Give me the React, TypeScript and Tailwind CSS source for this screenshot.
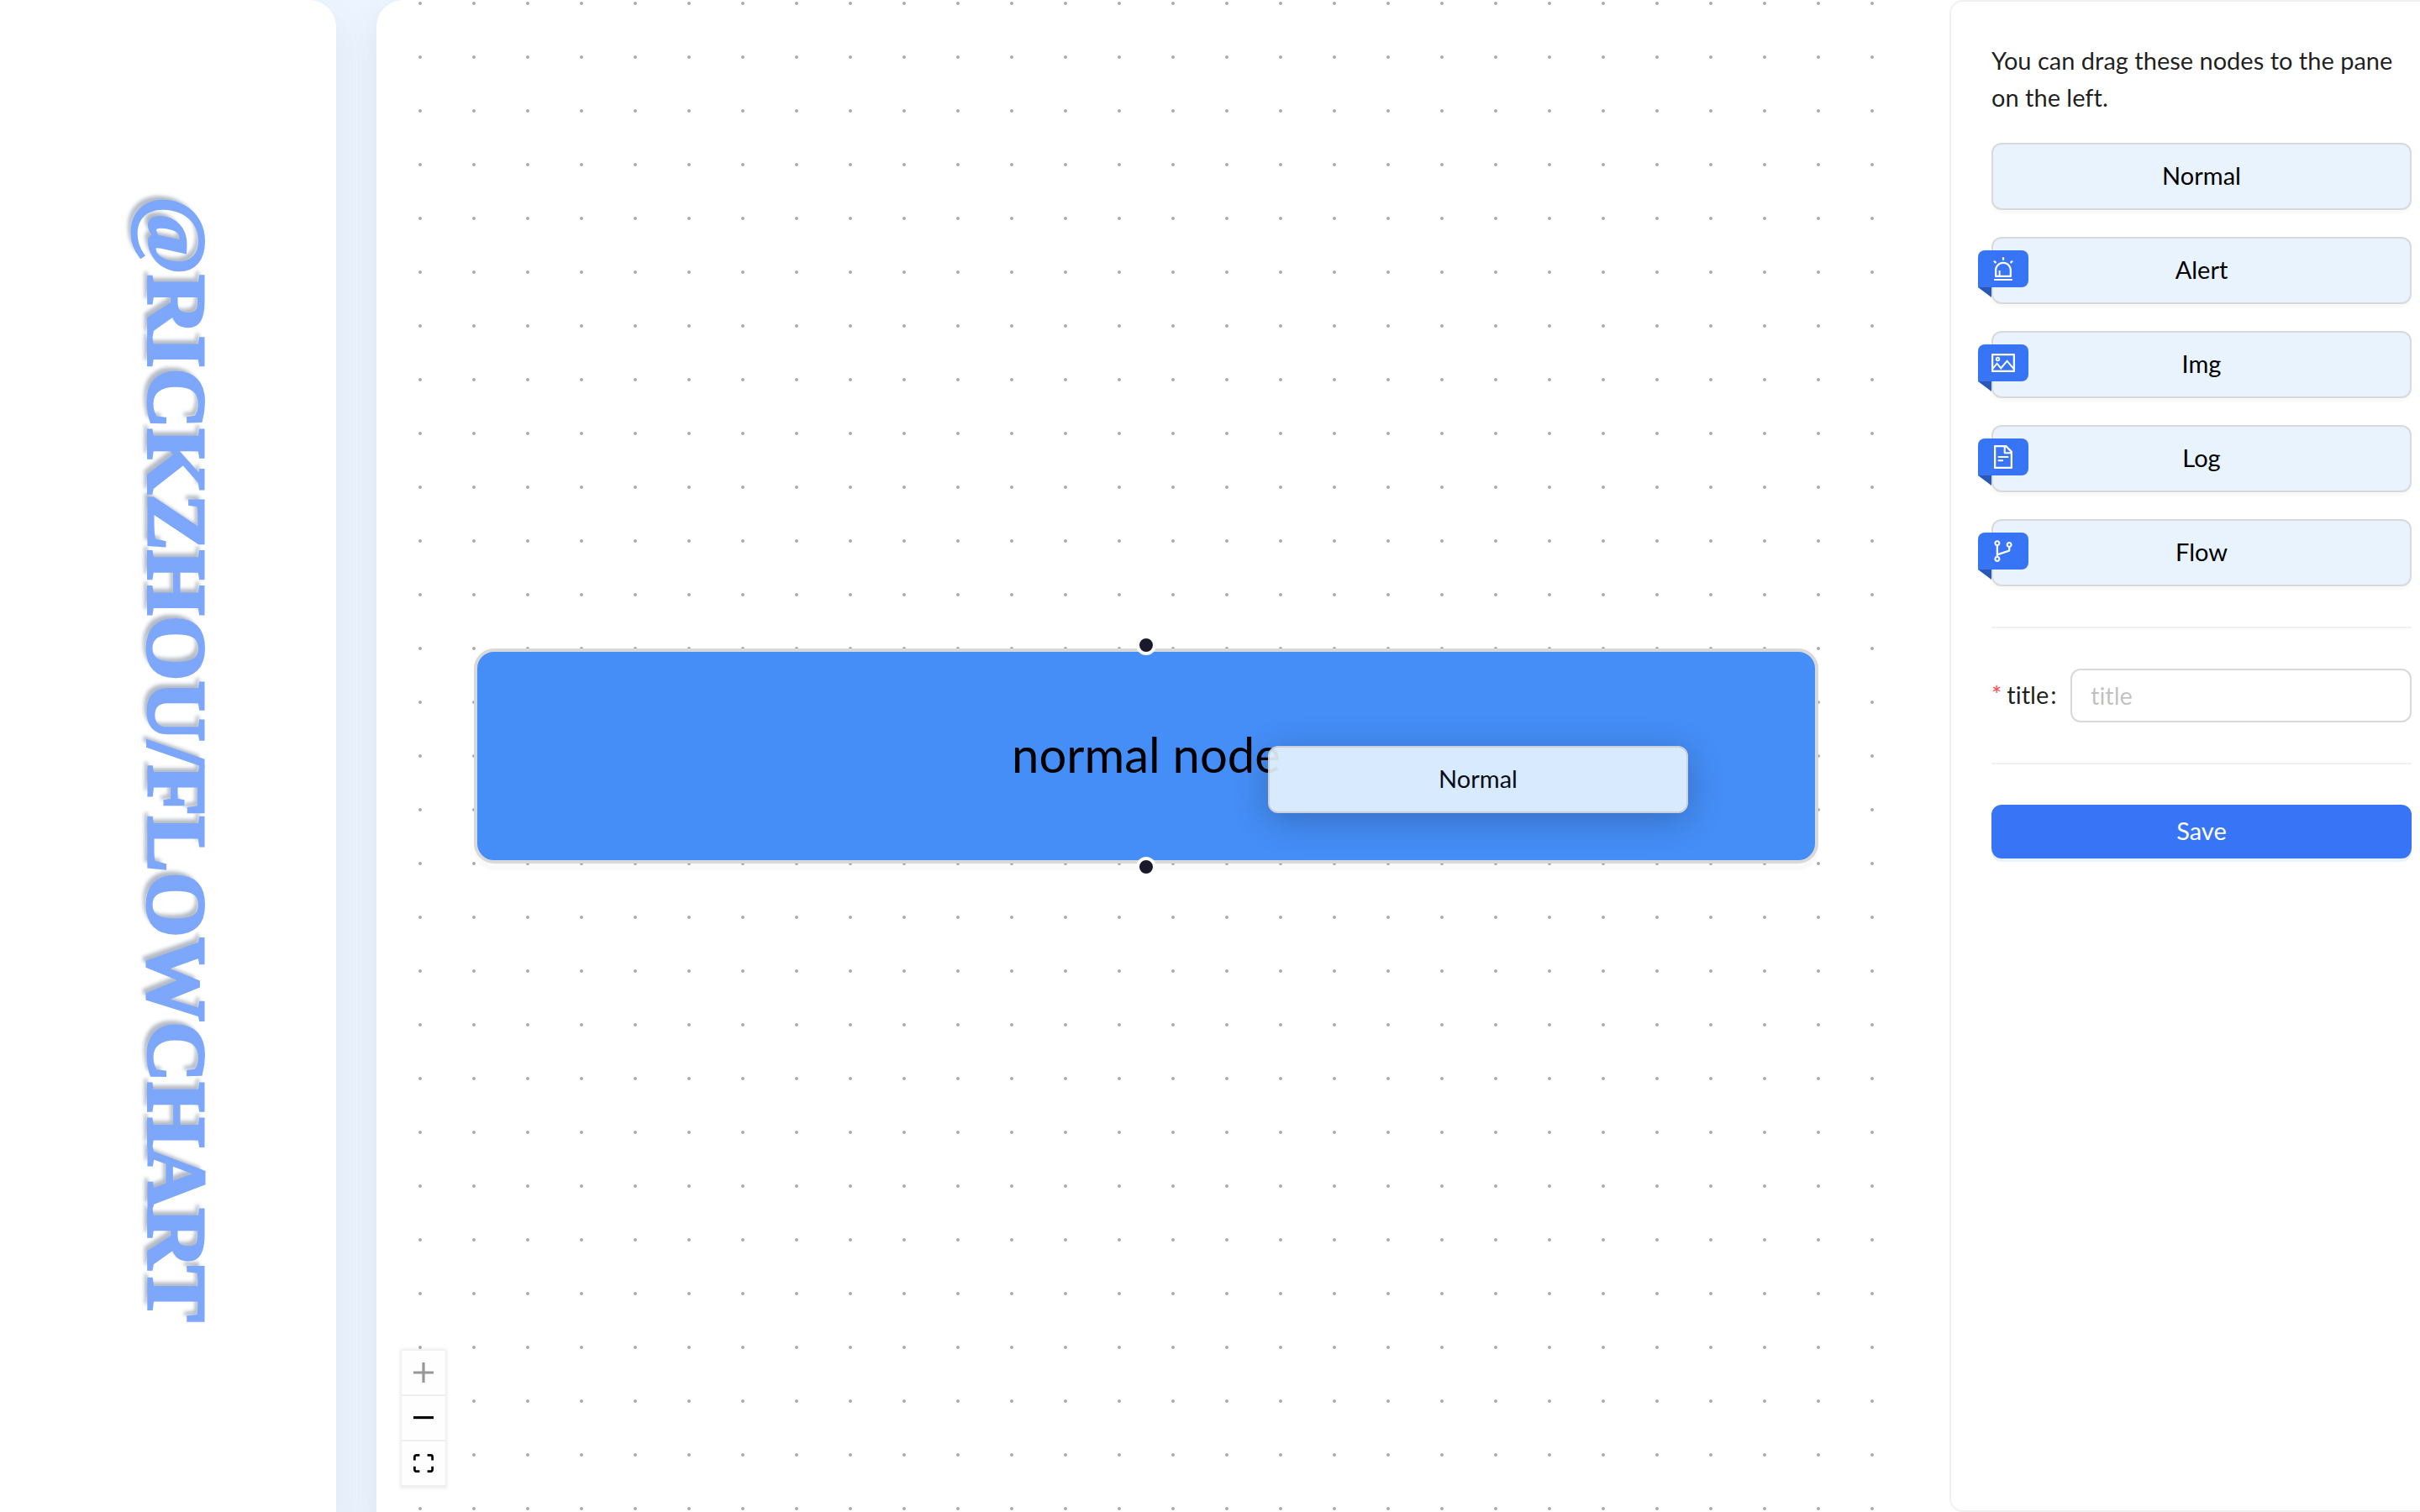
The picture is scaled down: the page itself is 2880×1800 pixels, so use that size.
import type { ReactNode } from "react";
import {
  AiOutlineAlert,
  AiOutlineBranches,
  AiOutlineFileText,
  AiOutlinePicture,
} from "react-icons/ai";

const paletteNodes: { label: string; icon?: ReactNode }[] = [
  { label: "Normal" },
  { label: "Alert", icon: <AiOutlineAlert /> },
  { label: "Img", icon: <AiOutlinePicture /> },
  { label: "Log", icon: <AiOutlineFileText /> },
  { label: "Flow", icon: <AiOutlineBranches /> },
];

function Ribbon({ children }: { children: ReactNode }) {
  return (
    <span className="absolute -left-[18px] top-3.5">
      <span className="flex h-11 w-15 items-center justify-center rounded-lg rounded-bl-none bg-[#3875f6] text-[32px] text-white">
        {children}
      </span>
      <svg className="block h-3 w-4" viewBox="0 0 16 12" aria-hidden="true">
        <path d="M0 0h16v12z" fill="#2a58b9" />
      </svg>
    </span>
  );
}

function PaletteNode({ label, icon }: { label: string; icon?: ReactNode }) {
  return (
    <button
      type="button"
      draggable
      className="relative flex h-20 w-full cursor-grab items-center justify-center rounded-xl border-2 border-[#d9d9d9] bg-[#e8f3fe] pb-0.5 text-black shadow-[0_4px_0_rgba(0,0,0,0.02)]"
    >
      {icon && <Ribbon>{icon}</Ribbon>}
      {label}
    </button>
  );
}

function Controls() {
  const button =
    "flex h-[54px] w-[52px] items-center justify-center border-b-2 border-[#eee] bg-[#fefefe]";
  return (
    <div className="absolute bottom-[30px] left-[30px] shadow-[0_0_4px_2px_rgba(0,0,0,0.08)]">
      <button type="button" aria-label="zoom in" disabled className={button}>
        <svg className="size-6 opacity-40" viewBox="0 0 32 32">
          <path d="M32 18.133H18.133V32h-4.266V18.133H0v-4.266h13.867V0h4.266v13.867H32z" />
        </svg>
      </button>
      <button type="button" aria-label="zoom out" className={button}>
        <svg className="w-6" viewBox="0 0 32 5">
          <path d="M0 0h32v4.2H0z" />
        </svg>
      </button>
      <button type="button" aria-label="fit view" className={button}>
        <svg className="w-6" viewBox="0 0 32 30">
          <path d="M3.692 4.63c0-.53.4-.938.939-.938h5.215V0H4.708C2.13 0 0 2.054 0 4.63v5.216h3.692V4.631zM27.354 0h-5.2v3.692h5.17c.53 0 .984.4.984.939v5.215H32V4.631A4.624 4.624 0 0027.354 0zm.954 24.83c0 .532-.4.94-.939.94h-5.215v3.768h5.215c2.577 0 4.631-2.13 4.631-4.707v-5.139h-3.692v5.139zm-23.677.94c-.531 0-.939-.4-.939-.94v-5.138H0v5.139c0 2.577 2.13 4.707 4.708 4.707h5.138V25.77H4.631z" />
        </svg>
      </button>
    </div>
  );
}

function Canvas() {
  return (
    <div className="relative flex-1 overflow-hidden rounded-tl-[32px]">
      <svg className="absolute inset-0 size-full" aria-hidden="true">
        <pattern id="dots" x="20" y="-28" width="64" height="64" patternUnits="userSpaceOnUse">
          <circle cx="32" cy="32" r="2" fill="#aaa" />
        </pattern>
        <rect width="100%" height="100%" fill="url(#dots)" />
      </svg>

      <div className="absolute left-1/2 top-1/2 flex h-64 w-[1600px] -translate-x-1/2 -translate-y-1/2 items-center justify-center rounded-3xl border-4 border-[#d9d9d9] bg-[#458ef7] pb-1 text-[58px] text-black shadow-[0_8px_0_rgba(0,0,0,0.02)]">
        normal node
        <span className="absolute -top-5 left-1/2 size-6 -translate-x-1/2 rounded-full border-4 border-white bg-[#1a192b]" />
        <span className="absolute -bottom-5 left-1/2 size-6 -translate-x-1/2 rounded-full border-4 border-white bg-[#1a192b]" />
      </div>

      <div className="absolute left-[1061px] top-[888px] flex h-20 w-[500px] items-center justify-center rounded-xl border-2 border-[#d9d9d9] bg-[#e9f4fe] pb-0.5 text-black opacity-90 shadow-[0_8px_40px_rgba(0,0,0,0.25)]">
        Normal
      </div>

      <Controls />
    </div>
  );
}

function Sidebar() {
  return (
    <aside className="-mr-10 ml-10 w-[600px] shrink-0 rounded-2xl border-2 border-[#f0f0f0] p-12 text-black/88">
      <p className="mb-8">
        You can drag these nodes to the pane
        <br />
        on the left.
      </p>
      <div className="flex flex-col gap-8">
        {paletteNodes.map((node) => (
          <PaletteNode key={node.label} {...node} />
        ))}
      </div>
      <form onSubmit={(event) => event.preventDefault()}>
        <div className="my-12 flex items-center border-y-2 border-[#f0f0f0] py-12">
          <label htmlFor="title" className="flex w-[94px] shrink-0 items-center pb-0.5">
            <span className="mr-1.5 text-[#ff4d4f]">*</span>
            title
            <span className="ml-0.5">:</span>
          </label>
          <input
            id="title"
            type="text"
            required
            placeholder="title"
            className="h-16 min-w-0 flex-1 rounded-xl border-2 border-[#d9d9d9] bg-white px-[22px] pb-0.5 outline-none placeholder:text-black/25"
          />
        </div>
        <button
          type="submit"
          className="h-16 w-full rounded-xl bg-[#3875f6] pb-0.5 text-white shadow-[0_4px_0_#e9f3ff]"
        >
          Save
        </button>
      </form>
    </aside>
  );
}

export default function App() {
  return (
    <div className="flex min-h-screen gap-12 overflow-hidden bg-[#ecf4ff] font-['Lato','Open_Sans',sans-serif] text-[29px] leading-[44px] [font-variant-ligatures:none]">
      <header className="flex w-[400px] shrink-0 items-center justify-center rounded-tr-[32px] bg-white pt-2 pl-5 shadow-[0_20px_40px_rgba(100,100,111,0.1)]">
        <h1 className="font-['Liberation_Serif',serif] text-[100px] leading-none font-bold text-[#7ca7fa] uppercase [-webkit-text-stroke:3px_#7ca7fa] [text-shadow:-6px_5px_4px_#b4bbc6] [writing-mode:vertical-rl]">
          @rickzhou/flowchart
        </h1>
      </header>
      <main className="flex min-w-0 flex-1 rounded-tl-[32px] bg-white shadow-[0_20px_40px_rgba(100,100,111,0.12)]">
        <Canvas />
        <Sidebar />
      </main>
    </div>
  );
}
